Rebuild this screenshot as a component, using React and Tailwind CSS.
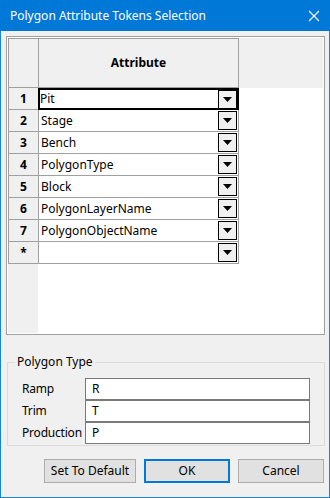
import React from 'react';

const rows = ['Pit', 'Stage', 'Bench', 'PolygonType', 'Block', 'PolygonLayerName', 'PolygonObjectName', ''];

const DropButton = () => (
    <div className="w-[19px] h-[19px] border border-black bg-[#f0f0f0] flex items-center justify-center">
        <svg width="9" height="5" viewBox="0 0 9 5">
            <path d="M0 0h9L4.5 5z" fill="#000" />
        </svg>
    </div>
);

const App = () => {
    return (
        <div className="w-[330px] h-[498px] bg-[#f0f0f0] border border-[#1883d7] border-t-0 flex flex-col text-[12px] text-black" style={{ fontFamily: '"Noto Sans", "Open Sans", sans-serif' }}>
            {/* title bar */}
            <div className="h-[31px] bg-[#0078d7] text-white flex items-center justify-between pl-[10px] pr-[10px] -mx-px">
                <span className="text-[12px]">Polygon Attribute Tokens Selection</span>
                <svg width="12" height="12" viewBox="0 0 12 12">
                    <path d="M1 1l10 10M11 1L1 11" stroke="#fff" strokeWidth="1.1" />
                </svg>
            </div>

            {/* grid */}
            <div className="mt-[5px] ml-[5px] w-[319px] h-[299px] border border-[#a0a0a0] bg-white p-px flex flex-col">
                <div className="flex h-[50px] bg-[#f0f0f0] w-[315px]">
                    <div className="w-[30px] border border-[#a0a0a0] border-r-0"></div>
                    <div className="w-[201px] border border-[#a0a0a0] flex items-center justify-center font-bold">Attribute</div>
                </div>
                <div className="flex flex-1">
                    <div className="w-[30px] bg-[#f0f0f0] flex flex-col">
                        {rows.map((r, i) => (
                            <div key={i} className="h-[22px] border-l border-b border-[#a0a0a0] flex items-center justify-center font-bold">
                                {i < 7 ? i + 1 : '*'}
                            </div>
                        ))}
                    </div>
                    <div className="w-[201px] flex flex-col">
                        {rows.map((r, i) => (
                            <div key={i} className={i === 0
                                ? 'h-[22px] border-2 border-black flex items-center justify-between pl-[0px] pr-0'
                                : 'h-[22px] border-l border-r border-b border-[#a0a0a0] flex items-center justify-between pl-[2px] pr-[1px]'}>
                                <span>{r}</span>
                                <DropButton />
                            </div>
                        ))}
                    </div>
                </div>
            </div>

            {/* group box */}
            <fieldset className="mt-[18px] ml-[6px] w-[318px] h-[93px] border border-[#dcdcdc] px-[13px] pt-0 pb-0">
                <legend className="px-[2px] -ml-[6px]">Polygon Type</legend>
                <div className="flex flex-col mt-[7px]">
                    {[['Ramp', 'R'], ['Trim', 'T'], ['Production', 'P']].map(([label, val], i) => (
                        <div key={label} className="flex items-center h-[22px]">
                            <span className="w-[64px] pl-[1px] tracking-[-0.2px]">{label}</span>
                            <div className={'flex-1 h-[22px] bg-white border border-[#7a7a7a] flex items-center pl-[6px] mr-[1px] ' + (i > 0 ? '-mt-px' : '')}>{val}</div>
                        </div>
                    ))}
                </div>
            </fieldset>

            {/* buttons */}
            <div className="flex justify-end gap-[8px] mt-[13px] mr-[5px]">
                <button className="w-[92px] h-[24px] bg-[#e1e1e1] border border-[#adadad]">Set To Default</button>
                <button className="w-[86px] h-[24px] bg-[#e1e1e1] border-2 border-[#0078d7]">OK</button>
                <button className="w-[86px] h-[24px] bg-[#e1e1e1] border border-[#adadad]">Cancel</button>
            </div>
        </div>
    );
};

export default App;
